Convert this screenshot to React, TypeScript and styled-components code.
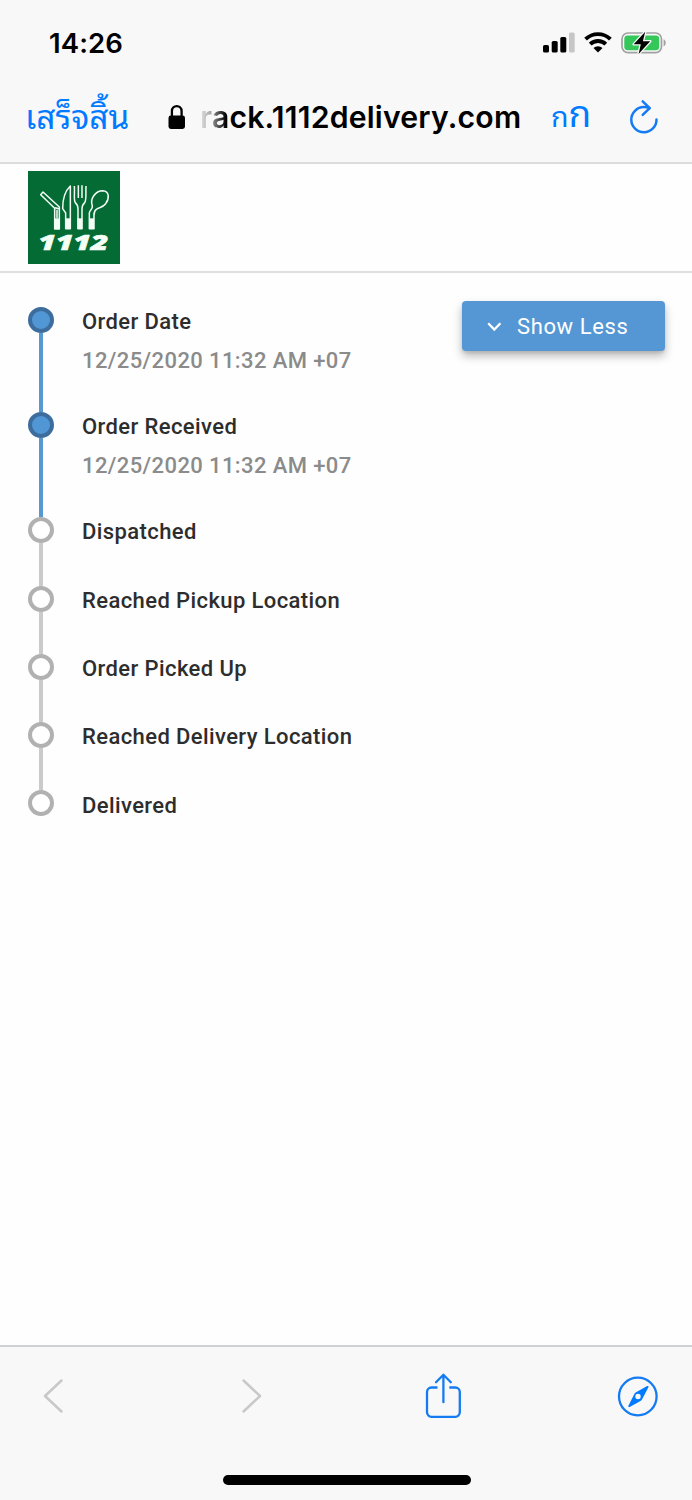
import React from 'react';
import styled, { createGlobalStyle } from 'styled-components';

const GlobalStyle = createGlobalStyle`
  * { box-sizing: border-box; }
  body { margin: 0; background: #fefefe; }
`;

const Screen = styled.div`
  width: 692px;
  height: 1500px;
  display: flex;
  flex-direction: column;
  overflow: hidden;
  background: #fefefe;
  font-family: Roboto, 'Liberation Sans', sans-serif;
`;

const BrowserTop = styled.header`
  height: 164px;
  flex: none;
  background: #f8f8f8;
  border-bottom: 2px solid #dcdcdd;
  font-family: Inter, 'Noto Sans Thai Looped', Loma, Waree, Garuda, 'Noto Sans Thai', sans-serif;
`;

const StatusBar = styled.div`
  height: 72px;
  display: flex;
  align-items: center;
  justify-content: space-between;
  padding: 13px 25px 0 49px;
`;

const Clock = styled.time`
  font-size: 27.5px;
  line-height: 32px;
  font-weight: 600;
  letter-spacing: 0.1px;
  color: #000;
`;

const StatusIcons = styled.div`
  display: flex;
  align-items: center;
`;

const AddressBar = styled.div`
  height: 90px;
  display: flex;
  align-items: center;
  padding: 0 32px 0 25px;
  color: #007aff;
`;

const Done = styled.a`
  width: 143px;
  flex: none;
  font-size: 33.5px;
  line-height: 44px;
  white-space: nowrap;
`;

const Url = styled.div`
  width: 353px;
  flex: none;
  padding-left: 14px;
  font-size: 30.2px;
  line-height: 40px;
  font-weight: 600;
  letter-spacing: 0.2px;
  white-space: nowrap;
  color: #000;
`;

const FadedText = styled.span`
  background: linear-gradient(90deg, #e2e2e2 0, #aaa 10px, #000 26px);
  background-clip: text;
  -webkit-background-clip: text;
  color: transparent;
`;

const TextSize = styled.div`
  display: flex;
  align-items: baseline;
  width: 90px;
  flex: none;
  padding: 0 0 4px 12px;
  white-space: nowrap;
`;

const Letter = styled.span<{ $size: number }>`
  font-size: ${(p) => p.$size}px;
  line-height: 40px;
`;

const BrandBar = styled.div`
  height: 109px;
  flex: none;
  padding: 7px 28px;
  border-bottom: 2px solid #dfdfdf;
`;

const Main = styled.main`
  flex: 1;
  display: flex;
  justify-content: space-between;
  align-items: flex-start;
  padding: 28px 27px 0 28px;
`;

const Timeline = styled.ol`
  list-style: none;
  margin: 0;
  padding: 5.7px 0 0;
`;

const Step = styled.li<{ $height: number }>`
  display: flex;
  gap: 28px;
  height: ${(p) => p.$height}px;
`;

const Rail = styled.div`
  width: 26px;
  display: flex;
  flex-direction: column;
  align-items: center;
`;

const Dot = styled.span<{ $done: boolean }>`
  width: 26px;
  height: 26px;
  flex: none;
  border-radius: 50%;
  border: ${(p) => (p.$done ? '4px solid #3d6d9d' : '4px solid #b1b1b1')};
  background: ${(p) => (p.$done ? '#5297d5' : '#fff')};
`;

const Line = styled.span<{ $done: boolean }>`
  width: 4px;
  flex: 1;
  background: ${(p) => (p.$done ? '#5698cf' : '#cacaca')};
`;

const StepText = styled.div`
  white-space: nowrap;
  font-size: 22px;
  line-height: 30px;
  font-weight: 500;
  letter-spacing: 0.4px;
`;

const StepTitle = styled.div`
  padding-top: 0.2px;
  color: #2d2d2d;
`;

const StepTime = styled.div`
  margin-top: 9px;
  color: #8b8b8b;
`;

const ToggleButton = styled.button`
  width: 203px;
  height: 50px;
  display: flex;
  align-items: center;
  gap: 15px;
  padding: 1px 0 0 25px;
  border: 0;
  border-radius: 4px;
  background: #5497d4;
  box-shadow: 0 5px 10px rgba(0, 0, 0, 0.28), 0 2px 3px rgba(0, 0, 0, 0.08);
  color: #fff;
  font-family: inherit;
  font-size: 22px;
  letter-spacing: 0.6px;
  white-space: nowrap;
`;

const BrowserBottom = styled.footer`
  height: 155px;
  flex: none;
  background: #f8f8f8;
  border-top: 2px solid #cdd2d4;
  display: flex;
  flex-direction: column;
  align-items: center;
  justify-content: space-between;
  padding: 0 0 15px 1px;
`;

const Toolbar = styled.nav`
  width: 100%;
  height: 98px;
  display: grid;
  grid-template-columns: 199px 184px 192px 42px;
  align-items: center;
  padding-left: 41px;
`;

const HomeIndicator = styled.div`
  width: 248px;
  height: 10px;
  border-radius: 5px;
  background: #000;
`;

const SignalIcon = () => (
  <svg width="32" height="21" viewBox="0 0 32 21">
    <rect x="0" y="13" width="6" height="7.5" rx="1.6" />
    <rect x="8.7" y="9" width="6" height="11.5" rx="1.6" />
    <rect x="17.3" y="5" width="6" height="15.5" rx="1.6" />
    <rect x="26" y="0.5" width="5.7" height="20" rx="1.6" fill="#c6c6c6" />
  </svg>
);

const WifiGraphic = styled.svg`
  margin: 0 9px;
`;

const WifiIcon = () => (
  <WifiGraphic width="28" height="21" viewBox="0 0 28 21">
    <g fill="none" stroke="#000" strokeWidth="3.9">
      <path d="M1.6 7.2a17.8 17.8 0 0 1 24.8 0" />
      <path d="M6.2 12.2a11.2 11.2 0 0 1 15.6 0" />
    </g>
    <path d="M14 20.6l-4.5-4.500a6.300 6.300 0 0 1 9 0z" />
  </WifiGraphic>
);

const BatteryIcon = () => (
  <svg width="46" height="24" viewBox="0 0 46 24">
    <rect x="1" y="2" width="39.5" height="19.6" rx="6" fill="none" stroke="#a1a1a3" strokeWidth="1.7" />
    <path d="M42.6 8.2v7.2c2.8-1.2 2.8-6 0-7.2z" fill="#a1a1a3" />
    <rect x="3.3" y="4.4" width="34.9" height="14.8" rx="3.4" fill="#34c759" />
    <path
      d="M24.2 0.8L12.7 13.3h7.1L17.6 22.9 29.2 10.3h-7.3z"
      stroke="#f8f8f8"
      strokeWidth="2.6"
      paintOrder="stroke"
      strokeLinejoin="round"
    />
  </svg>
);

const LockIcon = () => (
  <svg width="18" height="26" viewBox="0 0 18 26">
    <rect x="0.5" y="11.5" width="16.5" height="13.5" rx="2.4" />
    <path d="M3.9 12V7.2c0-6.8 9.7-6.8 9.7 0V12" fill="none" stroke="#000" strokeWidth="2.3" />
  </svg>
);

const ReloadIcon = () => (
  <svg width="30" height="36" viewBox="0 0 30 36" fill="none" stroke="#147bf3" strokeWidth="2.5" strokeLinecap="round" strokeLinejoin="round">
    <path d="M27.500 20.500a12.600 12.600 0 1 1-12.600-12.400c2 0 3.700.3 5.500 1" />
    <path d="M13.700 2.300l7 6.800-7 6.800" />
  </svg>
);

const BrandLogo = () => (
  <svg width="92" height="93" viewBox="24 18 276 279">
    <rect x="24" y="18" width="276" height="279" fill="#046b35" />
    <g fill="none" stroke="#f3fff5" strokeWidth="4.5" strokeLinejoin="round">
      <path d="M69 81l-7 8 42 41v62h14v-66z" />
      <path d="M105 128l12 3M111 134v26" />
      <path d="M151 63v128h-14v-47l-9-13c0-25 6-52 23-68z" />
      <path d="M163 63c2 20-3 42 3 50 8 7 8 12 8 20v58h12v-58c0-8 0-13 8-20 6-8 3-30 4-50" />
      <path d="M175 61v38M186 61v38" />
      <path d="M208 191v-47c1-10 10-9 9-21-8-21 9-46 31-46 20 1 21 23 9 39-11 14-22 10-29 18-8 7-6 14-6 22v35z" />
    </g>
    <g fill="#f3fff5">
      <path d="M103 160h15v32h-15z" />
      <path d="M137 160h15v32h-15z" />
      <path d="M172 160h15v32h-15z" />
      <path d="M207 160h15v32h-15z" />
    </g>
    <text
      x="55"
      y="254"
      textLength="210"
      lengthAdjust="spacingAndGlyphs"
      fill="#f3fff5"
      stroke="#f3fff5"
      strokeWidth="2"
      fontFamily="'Open Sans', sans-serif"
      fontSize="61"
      fontWeight="800"
      fontStyle="italic"
    >
      1112
    </text>
  </svg>
);

const ChevronDown = () => (
  <svg width="15" height="10" viewBox="0 0 15 10" fill="none" stroke="#fff" strokeWidth="2.3">
    <path d="M1.2 1.3l6.1 6.2 6.1-6.2" />
  </svg>
);

const BackIcon = () => (
  <svg width="22" height="36" viewBox="0 0 22 36" fill="none" stroke="#c8c8c8" strokeWidth="2.5" strokeLinecap="round" strokeLinejoin="round">
    <path d="M19.5 2.5L3 18l16.5 15.5" />
  </svg>
);

const ForwardIcon = () => (
  <svg width="22" height="36" viewBox="0 0 22 36" fill="none" stroke="#c8c8c8" strokeWidth="2.5" strokeLinecap="round" strokeLinejoin="round">
    <path d="M2.5 2.5L19 18 2.5 33.5" />
  </svg>
);

const ShareIcon = () => (
  <svg width="36" height="46" viewBox="0 0 36 46" fill="none" stroke="#147bf3" strokeWidth="2.3" strokeLinecap="round" strokeLinejoin="round">
    <path d="M12.500 14.500H6.500a4.500 4.500 0 0 0-4.500 4.500v20.300A4.500 4.500 0 0 0 6.500 43.800h23.800a4.500 4.500 0 0 0 4.500-4.500V19a4.500 4.500 0 0 0-4.500-4.500h-6" strokeLinecap="butt" />
    <path d="M18.400 29.200V2.200M11 9.200L18.400 1.800l7.400 7.400" />
  </svg>
);

const CompassIcon = () => (
  <svg width="42" height="42" viewBox="0 0 42 42">
    <circle cx="20.800" cy="21.5" r="18.8" fill="none" stroke="#147bf3" strokeWidth="2.3" />
    <path
      fill="#007aff"
      fillRule="evenodd"
      d="M30.2 11.1c.9-.5 1.8.3 1.2 1.200l-6 11.500c-.6 1.200-1.200 1.800-2.400 2.400l-10.300 5.700c-.9.5-1.800-.3-1.300-1.200l5.700-11.200c.6-1.200 1.200-1.800 2.400-2.400zM21 18.800a2.700 2.700 0 1 0 0 5.400 2.700 2.700 0 0 0 0-5.400z"
    />
  </svg>
);

interface StepData {
  title: string;
  time?: string;
}

const steps: StepData[] = [
  { title: 'Order Date', time: '12/25/2020 11:32 AM +07' },
  { title: 'Order Received', time: '12/25/2020 11:32 AM +07' },
  { title: 'Dispatched' },
  { title: 'Reached Pickup Location' },
  { title: 'Order Picked Up' },
  { title: 'Reached Delivery Location' },
  { title: 'Delivered' },
];

export default function App() {
  return (
    <Screen>
      <GlobalStyle />
      <BrowserTop>
        <StatusBar>
          <Clock>14:26</Clock>
          <StatusIcons>
            <SignalIcon />
            <WifiIcon />
            <BatteryIcon />
          </StatusIcons>
        </StatusBar>
        <AddressBar>
          <Done>เสร็จสิ้น</Done>
          <LockIcon />
          <Url>
            <FadedText>ra</FadedText>ck.1112delivery.com
          </Url>
          <TextSize>
            <Letter $size={28.5}>ก</Letter>
            <Letter $size={37}>ก</Letter>
          </TextSize>
          <ReloadIcon />
        </AddressBar>
      </BrowserTop>
      <BrandBar>
        <BrandLogo />
      </BrandBar>
      <Main>
        <Timeline>
          {steps.map((step, i) => (
            <Step key={step.title} $height={step.time ? 105.3 : i < steps.length - 1 ? 68.3 : 30}>
              <Rail>
                <Dot $done={!!step.time} />
                {i < steps.length - 1 && <Line $done={!!step.time} />}
              </Rail>
              <StepText>
                <StepTitle>{step.title}</StepTitle>
                {step.time && <StepTime>{step.time}</StepTime>}
              </StepText>
            </Step>
          ))}
        </Timeline>
        <ToggleButton>
          <ChevronDown />
          Show Less
        </ToggleButton>
      </Main>
      <BrowserBottom>
        <Toolbar>
          <BackIcon />
          <ForwardIcon />
          <ShareIcon />
          <CompassIcon />
        </Toolbar>
        <HomeIndicator />
      </BrowserBottom>
    </Screen>
  );
}
